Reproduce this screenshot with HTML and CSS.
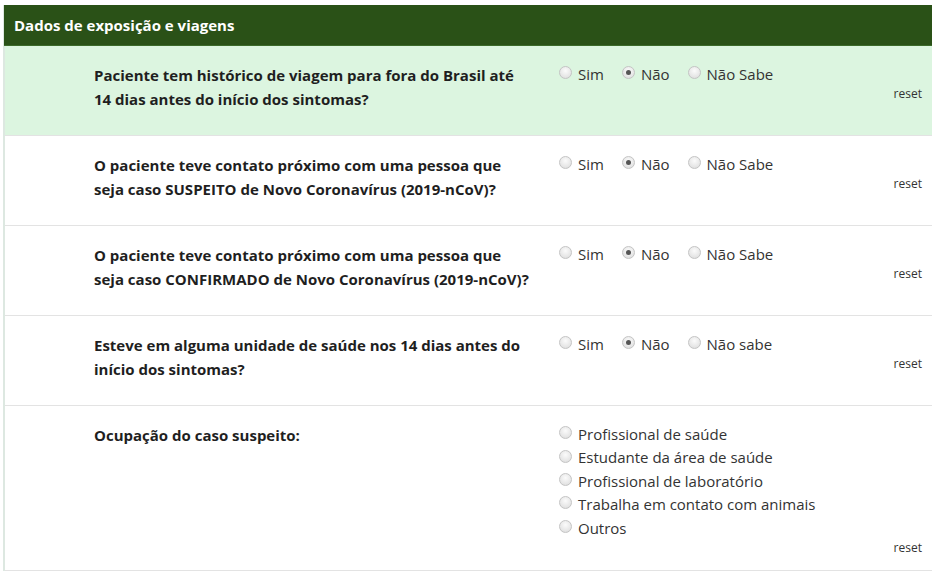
FILE: index.html
```html
<!DOCTYPE html>
<html lang="pt-BR">
<head>
<meta charset="utf-8">
<title>Dados de exposição e viagens</title>
<link rel="stylesheet" href="styles.css">
</head>
<body>
<div class="panel">
  <div class="panel-header">Dados de exposição e viagens</div>

  <div class="row row-highlight">
    <div class="question">Paciente tem histórico de viagem para fora do Brasil até 14 dias antes do início dos sintomas?</div>
    <div class="answer">
      <div class="options-inline">
        <label class="opt"><span class="radio"></span>Sim</label>
        <label class="opt"><span class="radio checked"></span>Não</label>
        <label class="opt"><span class="radio"></span>Não Sabe</label>
      </div>
      <div class="reset">reset</div>
    </div>
  </div>

  <div class="row">
    <div class="question">O paciente teve contato próximo com uma pessoa que seja caso SUSPEITO de Novo Coronavírus (2019-nCoV)?</div>
    <div class="answer">
      <div class="options-inline">
        <label class="opt"><span class="radio"></span>Sim</label>
        <label class="opt"><span class="radio checked"></span>Não</label>
        <label class="opt"><span class="radio"></span>Não Sabe</label>
      </div>
      <div class="reset">reset</div>
    </div>
  </div>

  <div class="row">
    <div class="question">O paciente teve contato próximo com uma pessoa que seja caso CONFIRMADO de Novo Coronavírus (2019-nCoV)?</div>
    <div class="answer">
      <div class="options-inline">
        <label class="opt"><span class="radio"></span>Sim</label>
        <label class="opt"><span class="radio checked"></span>Não</label>
        <label class="opt"><span class="radio"></span>Não Sabe</label>
      </div>
      <div class="reset">reset</div>
    </div>
  </div>

  <div class="row">
    <div class="question">Esteve em alguma unidade de saúde nos 14 dias antes do início dos sintomas?</div>
    <div class="answer">
      <div class="options-inline">
        <label class="opt"><span class="radio"></span>Sim</label>
        <label class="opt"><span class="radio checked"></span>Não</label>
        <label class="opt"><span class="radio"></span>Não sabe</label>
      </div>
      <div class="reset">reset</div>
    </div>
  </div>

  <div class="row row-last">
    <div class="question">Ocupação do caso suspeito:</div>
    <div class="answer">
      <div class="options-stacked">
        <label class="opt"><span class="radio"></span>Profissional de saúde</label>
        <label class="opt"><span class="radio"></span>Estudante da área de saúde</label>
        <label class="opt"><span class="radio"></span>Profissional de laboratório</label>
        <label class="opt"><span class="radio"></span>Trabalha em contato com animais</label>
        <label class="opt"><span class="radio"></span>Outros</label>
      </div>
      <div class="reset">reset</div>
    </div>
  </div>
</div>
</body>
</html>
```

FILE: styles.css
```css
html, body {
  margin: 0;
  padding: 0;
  background: #ffffff;
}

body {
  font-family: "Open Sans", "Noto Sans", sans-serif;
  color: #333333;
  width: 932px;
  overflow: hidden;
}

.panel {
  margin: 5px 0 0 3px;
  border-left: 2px solid #dde8e1;
}

.panel-header {
  margin-left: -1px;
  height: 41px;
  line-height: 41px;
  background: #2a5117;
  border-bottom: 1px solid #3c6a2a;
  box-sizing: border-box;
  color: #ffffff;
  font-weight: 700;
  font-size: 15px;
  padding-left: 10px;
}

.row {
  display: flex;
  align-items: flex-start;
  padding: 17px 10px 14px 89px;
  border-bottom: 1px solid #e3e3e3;
}

.row-highlight {
  background: #dcf5e0;
}

.row-last {
  padding-bottom: 15px;
}

.question {
  width: 465px;
  flex: none;
  font-weight: 700;
  font-size: 15px;
  line-height: 24px;
  color: #1f1f1f;
  margin-bottom: 10px;
  padding-right: 30px;
  box-sizing: border-box;
}

.answer {
  flex: 1;
  display: flex;
  flex-direction: column;
}

.options-inline {
  display: flex;
  gap: 18px;
  line-height: 23.4px;
  font-size: 15px;
}

.options-stacked {
  display: flex;
  flex-direction: column;
  line-height: 23.4px;
  font-size: 15px;
}

.opt {
  display: flex;
  align-items: center;
  gap: 6px;
  color: #333333;
}

.radio {
  width: 11px;
  height: 11px;
  border-radius: 50%;
  border: 1px solid #c4c4c4;
  background: radial-gradient(circle at 50% 35%, #fbfbfb 0%, #e4e4e4 70%, #d6d6d6 100%);
  box-sizing: content-box;
  position: relative;
  top: -2px;
  flex: none;
}

.radio.checked::after {
  content: "";
  position: absolute;
  left: 3px;
  top: 3px;
  width: 5px;
  height: 5px;
  border-radius: 50%;
  background: #555555;
}

.reset {
  align-self: flex-end;
  font-size: 12px;
  line-height: 14px;
  color: #333333;
  margin-top: 1px;
}
```
